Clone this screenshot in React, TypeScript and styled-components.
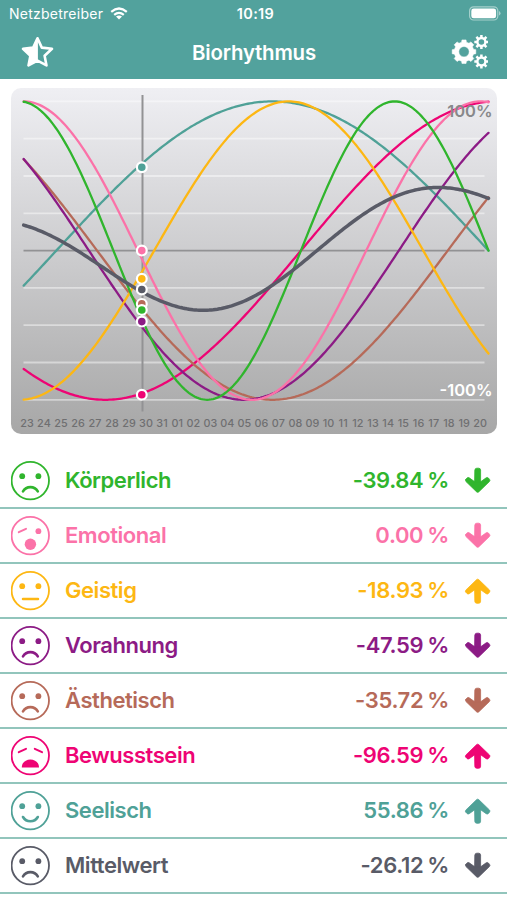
import React from "react";
import styled, { createGlobalStyle } from "styled-components";

const Global = createGlobalStyle`
  * { box-sizing: border-box; }
  body { margin: 0; background: #fff; font-family: Inter, "Liberation Sans", sans-serif; }
`;

const Screen = styled.main`
  width: 507px;
  height: 900px;
  overflow: hidden;
  display: flex;
  flex-direction: column;
`;

const Header = styled.header`
  height: 79px;
  flex: none;
  background: #52a29d;
  color: #fff;
`;

const StatusBar = styled.div`
  height: 27px;
  display: grid;
  grid-template-columns: 1fr auto 1fr;
  align-items: center;
  padding: 0 5px 0 9px;
`;

const Carrier = styled.div`
  display: flex;
  align-items: center;
  gap: 7px;
  font-size: 14px;
  letter-spacing: 0.25px;
`;

const Clock = styled.div`
  font-size: 14.5px;
  font-weight: 600;
  letter-spacing: 0.35px;
`;

const BatterySlot = styled.div`
  display: flex;
  justify-content: flex-end;
`;

const NavBar = styled.div`
  height: 50px;
  display: grid;
  grid-template-columns: 60px 1fr 60px;
  align-items: center;
  padding: 0 19px 0 20px;
`;

const Title = styled.h1`
  margin: 0;
  font-size: 20.4px;
  font-weight: 600;
  text-align: center;
  letter-spacing: -0.18px;
`;

const NavIcon = styled.div<{ $end?: boolean }>`
  display: flex;
  justify-content: ${(p) => (p.$end ? "flex-end" : "flex-start")};
`;

const ChartCard = styled.section`
  position: relative;
  flex: none;
  width: 486px;
  height: 346px;
  margin: 9px 0 0 11px;
  border-radius: 10px;
  background: linear-gradient(#efeff3 0%, #cbcbcd 50%, #a7a7a7 100%);
  display: flex;
  flex-direction: column;
  overflow: hidden;
`;

const Plot = styled.svg`
  display: block;
  flex: none;
`;

const ScaleLabel = styled.span<{ $top: number; $color: string }>`
  position: absolute;
  right: 4.5px;
  top: ${(p) => p.$top}px;
  font-size: 16.5px;
  line-height: 20px;
  font-weight: 600;
  color: ${(p) => p.$color};
`;

const Days = styled.div`
  display: flex;
  padding: 0 0 0 7.5px;
  font-size: 10.8px;
  line-height: 14px;
  font-weight: 500;
  letter-spacing: 0.1px;
  color: #6f6f71;
`;

const Day = styled.span<{ $width: number }>`
  flex: none;
  width: ${(p) => p.$width}px;
  display: flex;
  justify-content: center;
`;

const List = styled.ul`
  list-style: none;
  margin: 20px 0 0;
  padding: 0;
`;

const Row = styled.li<{ $color: string }>`
  height: 55px;
  display: grid;
  grid-template-columns: 54px 1fr auto 44px;
  align-items: center;
  padding: 0 14px 0 11px;
  border-bottom: 2px solid #92c5bc;
  color: ${(p) => p.$color};
  font-size: 22px;
  font-weight: 600;
`;

const Name = styled.span`
  padding-bottom: 2px;
  letter-spacing: -0.45px;
`;

const Value = styled.span`
  padding-bottom: 2px;
  letter-spacing: -0.35px;
  word-spacing: -1.2px;
`;

const ArrowSlot = styled.span`
  display: flex;
  justify-content: flex-end;
`;

type Mood = "sad" | "gasp" | "flat" | "despair" | "happy";
type Rhythm = {
  name: string;
  color: string;
  period: number;
  offset: number;
  value: string;
  up: boolean;
  mood: Mood;
};

const rhythms: Rhythm[] = [
  { name: "Körperlich", color: "#30b52d", period: 23, offset: 6, value: "-39.84 %", up: false, mood: "sad" },
  { name: "Emotional", color: "#fb72a8", period: 28, offset: 7, value: "0.00 %", up: false, mood: "gasp" },
  { name: "Geistig", color: "#fdb713", period: 33, offset: -8, value: "-18.93 %", up: true, mood: "flat" },
  { name: "Vorahnung", color: "#8c1b85", period: 38, offset: 15, value: "-47.59 %", up: false, mood: "sad" },
  { name: "Ästhetisch", color: "#b66a59", period: 43, offset: 17, value: "-35.72 %", up: false, mood: "sad" },
  { name: "Bewusstsein", color: "#ee0474", period: 48, offset: 31, value: "-96.59 %", up: true, mood: "despair" },
  { name: "Seelisch", color: "#4fa197", period: 53, offset: -2, value: "55.86 %", up: true, mood: "happy" },
];
const meanColor = "#595b67";

const DAYS_SHOWN = 28.5;
const TODAY = 7;
const LEFT = 12.7;
const RIGHT = 477.5;
const MID = 162.6;
const AMP = 149.2;

const level = (r: Rhythm, day: number) => Math.sin((2 * Math.PI * (day + r.offset)) / r.period);
const mean = (day: number) => rhythms.reduce((sum, r) => sum + level(r, day), 0) / rhythms.length;

const curve = (f: (day: number) => number) => {
  const points: string[] = [];
  for (let i = 0; i <= 228; i++) {
    const day = (i / 228) * DAYS_SHOWN;
    const x = LEFT + (i / 228) * (RIGHT - LEFT);
    points.push(`${x.toFixed(2)},${(MID - AMP * f(day)).toFixed(2)}`);
  }
  return points.join(" ");
};

const drawOrder = [6, 5, 4, 3, 2, 1, 0];

const dayLabels = Array.from({ length: 29 }, (_, i) => {
  const d = i < 9 ? 23 + i : i - 8;
  return String(d).padStart(2, "0");
});

const dayWidth = (label: string) => (label === "11" ? 14.2 : label.includes("1") ? 15.2 : 17);

function Chart() {
  return (
    <ChartCard>
      <Plot width="486" height="329" viewBox="0 0 486 329" fill="none">
        {[-4, -3, -2, -1, 1, 2, 3, 4].map((n) => (
          <path key={n} d={`M12.5 ${MID + (n * AMP) / 4}H473.5`} stroke="#fff" strokeOpacity="0.45" strokeWidth="1.8" />
        ))}
        <path d={`M12.5 ${MID}H473.5`} stroke="#929294" strokeWidth="1.7" />
        <path d="M131.5 7V323.5" stroke="#929294" strokeWidth="2" />
        {drawOrder.map((i) => (
          <polyline key={i} points={curve((d) => level(rhythms[i], d))} stroke={rhythms[i].color} strokeWidth="2.3" strokeLinecap="round" />
        ))}
        <polyline points={curve(mean)} stroke={meanColor} strokeWidth="3.5" strokeLinecap="round" />
        {drawOrder.map((i) => (
          <circle key={i} cx="130.8" cy={MID - AMP * level(rhythms[i], TODAY)} r="4.9" fill={rhythms[i].color} stroke="#fff" strokeWidth="2.2" />
        ))}
        <circle cx="130.8" cy={MID - AMP * mean(TODAY)} r="4.9" fill={meanColor} stroke="#fff" strokeWidth="2.2" />
      </Plot>
      <ScaleLabel $top={13} $color="#88888a">100%</ScaleLabel>
      <ScaleLabel $top={292} $color="#fff">-100%</ScaleLabel>
      <Days>
        {dayLabels.map((d) => (
          <Day key={d} $width={dayWidth(d)}>{d}</Day>
        ))}
      </Days>
    </ChartCard>
  );
}

function Face({ mood }: { mood: Mood }) {
  const stroke = { stroke: "currentColor", strokeWidth: 2, strokeLinecap: "round" as const, fill: "none" };
  const leftOpen = mood !== "gasp" && mood !== "despair";
  return (
    <svg width="40" height="40" viewBox="0 0 40 40" fill="currentColor">
      <circle cx="19.3" cy="19.6" r="18.7" {...stroke} strokeWidth={1.8} />
      {leftOpen ? <circle cx="11.2" cy="15.2" r="2.9" /> : <path d="M7.8 16.2L15 12.8" {...stroke} />}
      {mood === "despair" ? <path d="M23.8 12.8L31 16.2" {...stroke} /> : <circle cx="27.4" cy="15.2" r="2.9" />}
      {mood === "sad" && <path d="M12 30.4C15.3 24.7 23.5 24.7 26.8 30.4" {...stroke} strokeWidth={2.6} />}
      {mood === "gasp" && <circle cx="19.4" cy="28.3" r="5.7" />}
      {mood === "flat" && <path d="M12 27.9H27" {...stroke} strokeWidth={2.5} />}
      {mood === "despair" && <path d="M10.8 31.4C11 20.8 27.8 20.8 28 31.4Z" />}
      {mood === "happy" && <path d="M12 26C15.3 31.7 23.5 31.7 26.8 26" {...stroke} strokeWidth={2.6} />}
    </svg>
  );
}

function Arrow({ up }: { up: boolean }) {
  return (
    <svg width="30" height="28" viewBox="0 0 30 28" fill="none" stroke="currentColor" strokeLinecap="round" strokeLinejoin="round">
      <g transform={up ? "matrix(1 0 0 -1 0 27.5)" : undefined}>
        <path d="M11.8 3.2Q11.8 1.2 13.8 1.2H15.6Q17.6 1.2 17.6 3.2V18H11.8Z" fill="currentColor" strokeWidth="0.8" />
        <path
          d="M2.8 12.5L4 11Q5 10 6.2 10.8L11.8 14.8H17.6L23.2 10.8Q24.4 10 25.4 11L26.6 12.5Q27.4 13.6 26.4 14.6L15.7 24.9Q14.7 25.8 13.7 24.9L3 14.6Q2 13.6 2.8 12.5Z"
          fill="currentColor"
          strokeWidth="0.8"
        />
      </g>
    </svg>
  );
}

const gearPath = (cx: number, cy: number, outer: number, inner: number, hole: number, teeth: number, turn = 0) => {
  const pts: string[] = [];
  const step = (2 * Math.PI) / teeth;
  for (let i = 0; i < teeth; i++) {
    const a = i * step + turn;
    [[-0.32, inner], [-0.22, outer], [0.22, outer], [0.32, inner]].forEach(([k, r]) => {
      pts.push(`${(cx + r * Math.cos(a + k * step)).toFixed(2)} ${(cy + r * Math.sin(a + k * step)).toFixed(2)}`);
    });
  }
  return `M${pts.join("L")}ZM${cx - hole} ${cy}a${hole} ${hole} 0 1 0 ${2 * hole} 0a${hole} ${hole} 0 1 0 ${-2 * hole} 0Z`;
};

const rows = [...rhythms, { name: "Mittelwert", color: meanColor, value: "-26.12 %", up: false, mood: "sad" as Mood }];

export default function App() {
  return (
    <>
      <Global />
      <Screen>
        <Header>
          <StatusBar>
            <Carrier>
              Netzbetreiber
              <svg width="18" height="13" viewBox="0 0 18 13" fill="none" stroke="#fff" strokeWidth="2.2">
                <path d="M1.2 4.8Q9-1.8 16.8 4.8" />
                <path d="M4.2 7.9Q9 3.8 13.8 7.9" />
                <path d="M9 12.5L6 9.6Q9 7.3 12 9.6Z" fill="#fff" stroke="none" />
              </svg>
            </Carrier>
            <Clock>10:19</Clock>
            <BatterySlot>
              <svg width="33" height="15" viewBox="0 0 33 15">
                <rect x="0.6" y="0.8" width="28.2" height="13.2" rx="4" fill="none" stroke="#a5d0cc" strokeWidth="1.2" />
                <rect x="2.3" y="2.5" width="24.8" height="9.8" rx="2.4" fill="#fff" />
                <path d="M30 5v4.6q1.5-.7 1.5-2.3T30 5Z" fill="#a5d0cc" />
              </svg>
            </BatterySlot>
          </StatusBar>
          <NavBar>
            <NavIcon>
              <svg width="34" height="34" viewBox="0 0 34 34">
                <path d="M17.5 3.3L21.8 12.6L32 13.8L24.6 20.7L26.5 30.4L17.5 25.6L8.5 30.4L10.4 20.7L3 13.8L13.2 12.6Z" fill="none" stroke="#fff" strokeWidth="2.6" strokeLinejoin="round" />
                <path d="M17.9 3.3L13.2 12.6L3 13.8L10.4 20.7L8.5 30.4L17.9 25.6Z" fill="#fff" />
              </svg>
            </NavIcon>
            <Title>Biorhythmus</Title>
            <NavIcon $end>
              <svg width="42" height="38" viewBox="0 0 42 38" fill="#fff" fillRule="evenodd">
                <path d={gearPath(18, 18.7, 12, 9.8, 5.2, 8)} stroke="#fff" strokeWidth="0.5" strokeLinejoin="round" />
                <path d={gearPath(35.4, 9, 7.2, 5.2, 2.8, 8)} />
                <path d={gearPath(35.4, 28.5, 7.2, 5.2, 2.8, 8)} />
              </svg>
            </NavIcon>
          </NavBar>
        </Header>
        <Chart />
        <List>
          {rows.map((r) => (
            <Row key={r.name} $color={r.color}>
              <Face mood={r.mood} />
              <Name>{r.name}</Name>
              <Value>{r.value}</Value>
              <ArrowSlot>
                <Arrow up={r.up} />
              </ArrowSlot>
            </Row>
          ))}
        </List>
      </Screen>
    </>
  );
}
